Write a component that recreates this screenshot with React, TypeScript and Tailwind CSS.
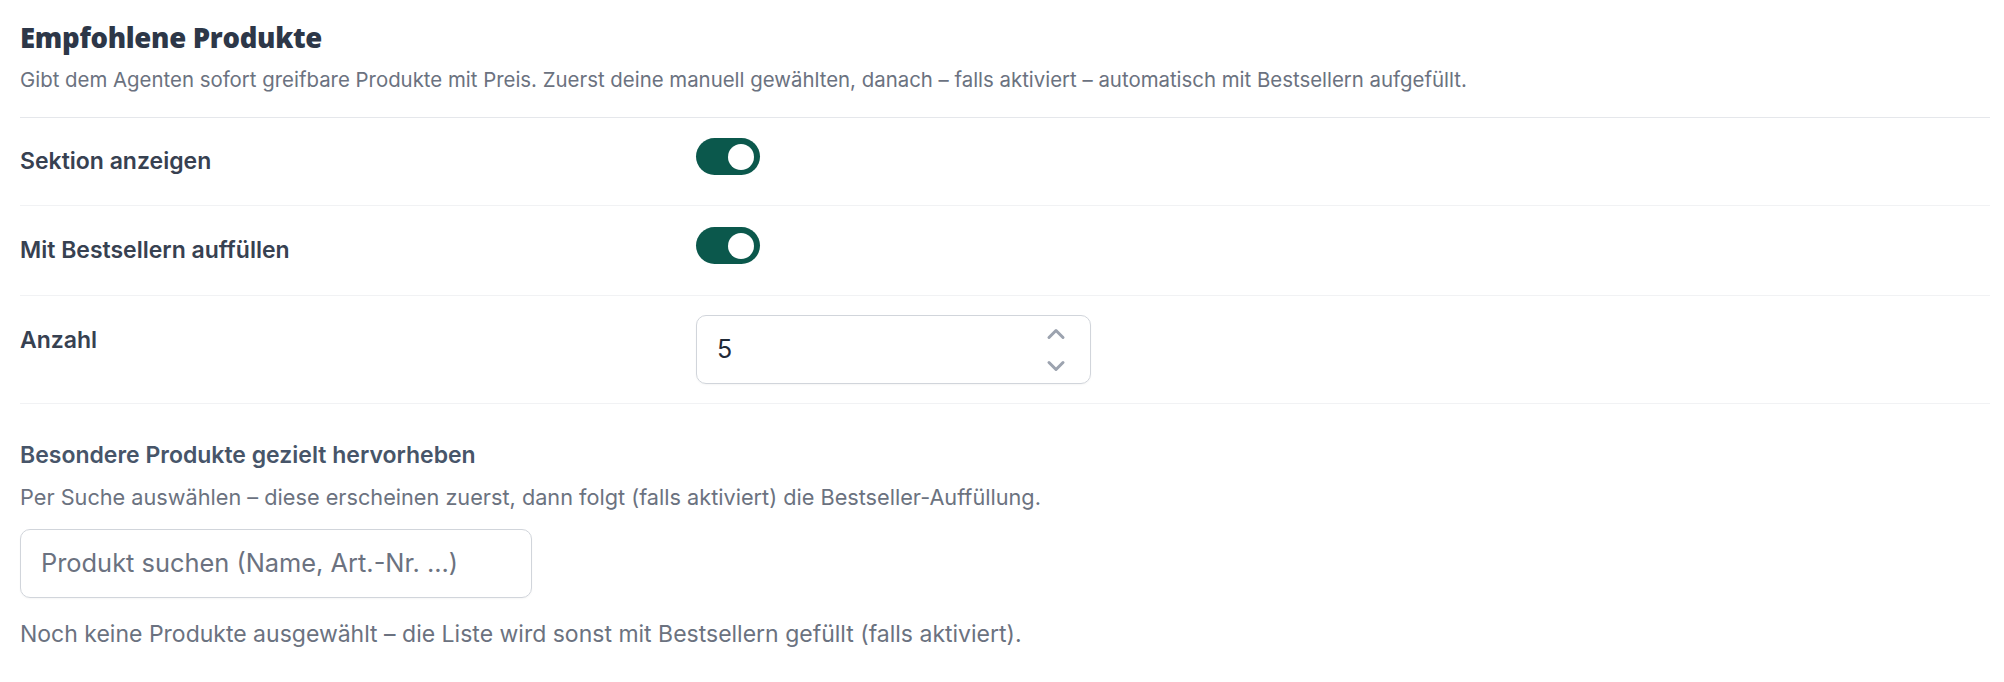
import { ChevronUp, ChevronDown } from "lucide-react";

function Toggle() {
  return (
    <div className="flex h-[37px] w-[64px] items-center justify-end rounded-full bg-[#0b584c] pr-[6px]">
      <div className="h-[26px] w-[26px] rounded-full bg-white" />
    </div>
  );
}

export default function App() {
  return (
    <div className="min-h-screen bg-white pl-[20px] pr-[14px] pt-[20px] font-['Inter',sans-serif] text-[#374151]">
      <div className="border-b border-[#e5e7eb] pb-[23px]">
        <h1 className="font-['Open_Sans',sans-serif] text-[27.5px] font-extrabold leading-[36px] tracking-[-0.3px] text-[#2d3748]">
          Empfohlene Produkte
        </h1>
        <p className="mt-[10px] text-[20.4px] leading-[28px] text-[#6b7280]">
          Gibt dem Agenten sofort greifbare Produkte mit Preis. Zuerst deine manuell gewählten, danach – falls aktiviert – automatisch mit Bestsellern aufgefüllt.
        </p>
      </div>

      <div className="flex h-[88px] items-start border-b border-[#f1f2f4] pt-[20px]">
        <div className="w-[676px] shrink-0 pt-[7px] text-[23px] font-semibold leading-[32px]">Sektion anzeigen</div>
        <Toggle />
      </div>

      <div className="flex h-[90px] items-start border-b border-[#f1f2f4] pt-[21px]">
        <div className="w-[676px] shrink-0 pt-[7px] text-[23px] font-semibold leading-[32px]">Mit Bestsellern auffüllen</div>
        <Toggle />
      </div>

      <div className="flex items-start border-b border-[#f1f2f4] pb-[19px] pt-[19px]">
        <div className="w-[676px] shrink-0 pt-[9px] text-[23px] font-semibold leading-[32px]">Anzahl</div>
        <div className="flex h-[69px] w-[395px] items-center justify-between rounded-[10px] border border-[#d1d5db] pl-[20px] pr-[20px] shadow-[0_1px_2px_rgba(0,0,0,0.04)]">
          <span className="text-[25px] text-[#1f2937]">5</span>
          <div className="flex flex-col items-center gap-[4px] text-[#9ca3af]">
            <ChevronUp size={28} strokeWidth={2.6} />
            <ChevronDown size={28} strokeWidth={2.6} />
          </div>
        </div>
      </div>

      <div className="pt-[35px]">
        <div className="text-[23px] font-semibold leading-[32px] text-[#475569]">Besondere Produkte gezielt hervorheben</div>
        <p className="mt-[12px] text-[21.7px] leading-[28px] text-[#6b7280]">
          Per Suche auswählen – diese erscheinen zuerst, dann folgt (falls aktiviert) die Bestseller-Auffüllung.
        </p>
        <div className="mt-[18px] flex h-[69px] w-[512px] items-center rounded-[10px] border border-[#d1d5db] px-[20px] shadow-[0_1px_2px_rgba(0,0,0,0.04)]">
          <span className="text-[25.4px] text-[#6b7280]">Produkt suchen (Name, Art.-Nr. ...)</span>
        </div>
        <p className="mt-[21px] text-[23px] leading-[30px] text-[#6b7280]">
          Noch keine Produkte ausgewählt – die Liste wird sonst mit Bestsellern gefüllt (falls aktiviert).
        </p>
      </div>
    </div>
  );
}
